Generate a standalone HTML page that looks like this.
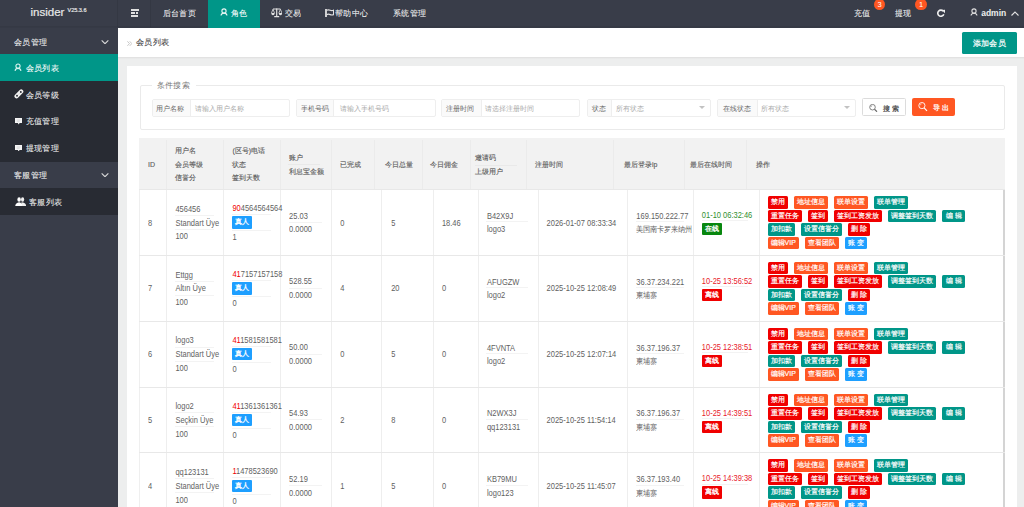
<!DOCTYPE html><html><head><meta charset="utf-8"><style>
*{margin:0;padding:0;box-sizing:border-box}
html,body{width:1024px;height:507px;overflow:hidden;background:#EDEEEE;font-family:"Liberation Sans",sans-serif;color:#666}
.a{position:absolute}
.t{position:absolute;white-space:nowrap}
.hd{position:absolute;left:0;top:0;width:1024px;height:28px;background:#393D49}
.sd{position:absolute;left:0;top:27px;width:118px;height:480px;background:#393D49}
.nv{position:absolute;white-space:nowrap;color:rgba(255,255,255,.9);font-size:8px;line-height:10px;letter-spacing:.4px;-webkit-text-stroke:.15px rgba(255,255,255,.6)}
.sub{position:absolute;left:0;width:118px;background:#282B33}
.strip{position:absolute;left:118px;top:28px;width:906px;height:29px;background:#fff}
.card{position:absolute;left:126.5px;top:66px;width:890.5px;height:460px;background:#fff}
.grp{position:absolute;top:98.5px;height:18px;border:1px solid #eee;border-radius:2px;background:#fff}
.lb{position:absolute;left:0;top:0;height:16px;background:#FAFAFA;border-right:1px solid #eee;color:#555;font-size:7px;line-height:16px;text-align:center;white-space:nowrap}
.ph{position:absolute;top:0;height:16px;color:#b0b0b0;font-size:6.5px;line-height:16px;white-space:nowrap}
.arr{position:absolute;top:6.5px;width:0;height:0;border-left:3px solid transparent;border-right:3px solid transparent;border-top:3.5px solid #c2c2c2}
.tt{position:absolute;white-space:nowrap;font-size:7px;color:#5a5a5a;line-height:10px;-webkit-text-stroke:.12px #5a5a5a}
.td{position:absolute;white-space:nowrap;font-size:7.5px;color:#5f5f5f;line-height:10px;transform:scaleY(1.12);transform-origin:0 60%}
.vl{position:absolute;width:1px;background:#eeeeee}
.hl{position:absolute;height:1px;background:#e8e8e8}
.b{position:absolute;height:12.5px;color:#fff;font-size:7px;line-height:12.5px;text-align:center;border-radius:1.5px;white-space:nowrap;-webkit-text-stroke:.18px #fff}
.r{background:#F00000}.o{background:#FF5722}.g{background:#009688}.bl{background:#1E9FFF}
.ul{position:absolute;height:1px;background:#f3f3f3}
</style></head><body>
<div class="hd"></div>
<div class="sd"></div>
<div class="t" style="left:30.5px;top:5px;font-size:11.5px;line-height:14px;color:#e8e8e8;-webkit-text-stroke:.2px #e8e8e8">insider</div>
<div class="t" style="left:67.5px;top:7px;font-size:5.5px;line-height:6px;color:#e8e8e8;-webkit-text-stroke:.2px #e8e8e8">V25.3.6</div>
<div class="a" style="left:117px;top:0;width:1px;height:27px;background:rgba(0,0,0,.08)"></div>
<div class="a" style="left:150px;top:0;width:1px;height:27px;background:rgba(0,0,0,.08)"></div>
<div class="a" style="left:0;top:26px;width:1024px;height:1px;background:rgba(0,0,0,.06)"></div><div class="a" style="left:0;top:27px;width:1024px;height:1px;background:rgba(0,0,0,.04)"></div>
<div class="a" style="left:130.8px;top:9.1px;width:7.9px;height:1.7px;background:#e0e0e0"></div>
<div class="a" style="left:130.8px;top:12.2px;width:4.3px;height:1.7px;background:#e0e0e0"></div>
<div class="a" style="left:135.9px;top:12.2px;width:2.1px;height:1.7px;background:#e0e0e0"></div>
<div class="a" style="left:130.8px;top:15px;width:7.5px;height:1.5px;background:#e0e0e0"></div>
<div class="nv" style="left:162.5px;top:8.5px">后台首页</div>
<div class="a" style="left:208px;top:0;width:51.5px;height:27.5px;background:#009688"></div>
<svg class="a" style="left:220.2px;top:8.4px" width="8" height="8.5" viewBox="-0.5 -0.5 8 8.5"><circle cx="3.5" cy="2.475" r="2.1" fill="none" stroke="#e6f5f3" stroke-width="1.1"/><path d="M0.55 6.95 C0.84 4.65 2.1 4.65 3.5 4.65 C4.8999999999999995 4.65 6.16 4.65 6.45 6.95" fill="none" stroke="#e6f5f3" stroke-width="1.1"/></svg>
<div class="nv" style="left:230.5px;top:8.5px;color:#fff">角色</div>
<svg class="a" style="left:270.6px;top:8.4px" width="11.4" height="9.4" viewBox="0 0 11.4 9.4"><path d="M2 1 H9.4 M5.7 0.3 V8.4 M3.2 8.7 H8.2" stroke="#e2e2e2" stroke-width="1.2" fill="none"/><path d="M2 1.2 L0.5 5 M2 1.2 L3.5 5 M9.4 1.2 L7.9 5 M9.4 1.2 L10.9 5" stroke="#e2e2e2" stroke-width="0.8" fill="none"/><path d="M0.2 5 H3.8 Q3.6 7.2 2 7.2 Q0.4 7.2 0.2 5 Z M7.6 5 H11.2 Q11 7.2 9.4 7.2 Q7.8 7.2 7.6 5 Z" fill="#e2e2e2"/></svg>
<div class="nv" style="left:284.5px;top:8.5px">交易</div>
<svg class="a" style="left:324.8px;top:8.8px" width="9.4" height="8" viewBox="0 0 9.4 8"><path d="M1 0 V8" stroke="#e2e2e2" stroke-width="1.8"/><path d="M1.6 1.2 Q3.5 0.4 5.2 1.2 Q7 2 8.6 1.2 V5.6 Q7 6.4 5.2 5.6 Q3.5 4.8 1.6 5.6" stroke="#e2e2e2" stroke-width="1.2" fill="none"/></svg>
<div class="nv" style="left:335px;top:8.5px">帮助中心</div>
<div class="nv" style="left:393px;top:8.5px">系统管理</div>
<div class="nv" style="left:853.5px;top:8.5px">充值</div>
<div class="a" style="left:873.9px;top:-1.4px;width:11.6px;height:11.2px;border-radius:6px;background:#FF5722"></div>
<div class="t" style="left:873.9px;top:-0.5px;width:11.6px;text-align:center;font-size:7.5px;line-height:10px;color:#fff">3</div>
<div class="nv" style="left:895px;top:8.5px">提现</div>
<div class="a" style="left:915.4px;top:-1.4px;width:11.6px;height:11.2px;border-radius:6px;background:#FF5722"></div>
<div class="t" style="left:915.4px;top:-0.5px;width:11.6px;text-align:center;font-size:7.5px;line-height:10px;color:#fff">1</div>
<svg class="a" style="left:936.5px;top:8.8px" width="8.6" height="8.4" viewBox="0 0 8.6 8.4"><path d="M6.27 2.21 A3.1 3.1 0 1 0 6.81 5.26" stroke="#eee" stroke-width="1.6" fill="none"/><path d="M5 1 L8.4 0.6 L7.8 4.2 Z" fill="#eee"/></svg>
<svg class="a" style="left:970.4px;top:8.2px" width="8" height="8.6" viewBox="-0.5 -0.5 8 8.6"><circle cx="3.5" cy="2.508" r="2.1" fill="none" stroke="#ddd" stroke-width="1.1"/><path d="M0.55 7.05 C0.84 4.712 2.1 4.712 3.5 4.712 C4.8999999999999995 4.712 6.16 4.712 6.45 7.05" fill="none" stroke="#ddd" stroke-width="1.1"/></svg>
<div class="t" style="left:981.2px;top:7px;font-size:8.5px;font-weight:bold;line-height:12px;color:#eee">admin</div>
<svg class="a" style="left:1010.5px;top:10.5px" width="8" height="5" viewBox="0 0 16 10"><path d="M1 9 L8 2 L15 9" stroke="#e2e2e2" stroke-width="2.2" fill="none"/></svg>
<div class="nv" style="left:14px;top:37.5px">会员管理</div>
<svg class="a" style="left:101px;top:39.5px" width="8" height="4.6" viewBox="0 0 18 11"><path d="M1 1 L9 9 L17 1" stroke="#d8d8d8" stroke-width="2.6" fill="none"/></svg>
<div class="sub" style="top:54px;height:107.5px"></div>
<div class="a" style="left:0;top:54px;width:118px;height:27px;background:#009688"></div>
<svg class="a" style="left:14.4px;top:63.4px" width="8" height="8.9" viewBox="-0.5 -0.5 8 8.9"><circle cx="3.5" cy="2.607" r="2.1" fill="none" stroke="#d8f3ee" stroke-width="1.1"/><path d="M0.55 7.3500000000000005 C0.84 4.898000000000001 2.1 4.898000000000001 3.5 4.898000000000001 C4.8999999999999995 4.898000000000001 6.16 4.898000000000001 6.45 7.3500000000000005" fill="none" stroke="#d8f3ee" stroke-width="1.1"/></svg>
<div class="nv" style="left:25.5px;top:64px;color:#fff">会员列表</div>
<svg class="a" style="left:13.8px;top:89.3px" width="9.8" height="9.8" viewBox="0 0 9.8 9.8"><rect x="-0.5" y="2.8" width="10.8" height="4.2" rx="2.1" transform="rotate(-45 4.9 4.9)" fill="#f2f2f2"/><circle cx="3" cy="6.8" r="0.95" fill="#282B33"/><circle cx="6.8" cy="3" r="0.95" fill="#282B33"/><path d="M3.9 5.9 L5.9 3.9" stroke="#c8c8cc" stroke-width="0.7"/></svg>
<div class="nv" style="left:25.5px;top:90.5px">会员等级</div>
<svg class="a" style="left:14.7px;top:118.2px" width="7.4" height="6.4" viewBox="0 0 7.4 6.4"><path d="M0 0 H7.4 V5 H4.6 L3.7 6.4 L2.8 5 H0 Z" fill="#f4f4f4"/><path d="M1.8 2 H5.6 M1.8 3.3 H4.6" stroke="#c8c9cc" stroke-width="0.6"/></svg>
<div class="nv" style="left:25.5px;top:117.2px">充值管理</div>
<svg class="a" style="left:14.7px;top:145px" width="7.4" height="6.4" viewBox="0 0 7.4 6.4"><path d="M0 0 H7.4 V5 H4.6 L3.7 6.4 L2.8 5 H0 Z" fill="#f4f4f4"/><path d="M1.8 2 H5.6 M1.8 3.3 H4.6" stroke="#c8c9cc" stroke-width="0.6"/></svg>
<div class="nv" style="left:25.5px;top:144.2px">提现管理</div>
<div class="a" style="left:0;top:161.5px;width:118px;height:26.5px;background:#393D49"></div>
<div class="nv" style="left:14px;top:170.8px">客服管理</div>
<svg class="a" style="left:101px;top:172.7px" width="8" height="4.6" viewBox="0 0 18 11"><path d="M1 1 L9 9 L17 1" stroke="#d8d8d8" stroke-width="2.6" fill="none"/></svg>
<div class="sub" style="top:188px;height:26.5px"></div>
<svg class="a" style="left:14.6px;top:196.6px" width="11.4" height="9.6" viewBox="0 0 11.4 9.6"><ellipse cx="4.1" cy="2.5" rx="1.75" ry="2.3" fill="#fff"/><ellipse cx="7.6" cy="2.5" rx="1.6" ry="2.2" fill="#f0f0f0"/><path d="M6.3 5.3 Q10.8 5.3 11.3 9.2 H7.6 Z" fill="#f0f0f0"/><path d="M0.2 9.2 Q0.5 5.6 4.1 5.2 Q7.7 5.6 8 9.2 Z" fill="#fff"/></svg>
<div class="nv" style="left:29px;top:197.6px">客服列表</div>
<div class="strip"></div>
<div class="a" style="left:118px;top:57px;width:906px;height:2px;background:linear-gradient(#dedede,#EDEEEE)"></div>
<svg class="a" style="left:127px;top:40.8px" width="5.4" height="5.2" viewBox="0 0 11 10.4"><path d="M0.8 0.6 L5 5.2 L0.8 9.8 M5.6 0.6 L9.8 5.2 L5.6 9.8" stroke="#a8a8a8" stroke-width="1.3" fill="none"/></svg>
<div class="t" style="left:136.2px;top:38px;font-size:8px;line-height:10px;color:#444;letter-spacing:.25px;-webkit-text-stroke:.1px #444">会员列表</div>
<div class="a" style="left:962.2px;top:32px;width:54.8px;height:22.4px;background:#009688;border-radius:1.5px"></div>
<div class="t" style="left:972.5px;top:39px;font-size:8px;line-height:10px;color:#fff;letter-spacing:.45px;-webkit-text-stroke:.2px #fff">添加会员</div>
<div class="card"></div>
<div class="a" style="left:139.5px;top:85px;width:865.5px;height:44.5px;border:1px solid #eaeaea;border-radius:2px"></div>
<div class="a" style="left:152px;top:82px;width:43.5px;height:6px;background:#fff"></div>
<div class="t" style="left:156.6px;top:81px;font-size:8px;line-height:10px;color:#777;letter-spacing:.4px">条件搜索</div>
<div class="grp" style="left:151.6px;width:138px"><div class="lb" style="width:38px"></div><div class="t" style="left:3.700000000000017px;top:4.4px;font-size:7px;line-height:10px;color:#666">用户名称</div><div class="t" style="left:42.599999999999994px;top:4.4px;font-size:7px;line-height:10px;color:#aaa">请输入用户名称</div></div>
<div class="grp" style="left:296.3px;width:139.4px"><div class="lb" style="width:37.2px"></div><div class="t" style="left:4.0px;top:4.4px;font-size:7px;line-height:10px;color:#666">手机号码</div><div class="t" style="left:42.69999999999999px;top:4.4px;font-size:7px;line-height:10px;color:#aaa">请输入手机号码</div></div>
<div class="grp" style="left:441.4px;width:139.1px"><div class="lb" style="width:40px"></div><div class="t" style="left:4.100000000000023px;top:4.4px;font-size:7px;line-height:10px;color:#666">注册时间</div><div class="t" style="left:42.80000000000001px;top:4.4px;font-size:7px;line-height:10px;color:#aaa">请选择注册时间</div></div>
<div class="grp" style="left:586.6px;width:124.4px"><div class="lb" style="width:24px"></div><div class="t" style="left:4.100000000000023px;top:4.4px;font-size:7px;line-height:10px;color:#666">状态</div><div class="t" style="left:28.399999999999977px;top:4.4px;font-size:7px;line-height:10px;color:#aaa">所有状态</div><div class="arr" style="left:111.19999999999993px"></div></div>
<div class="grp" style="left:717.4px;width:138.7px"><div class="lb" style="width:39.8px"></div><div class="t" style="left:4.2000000000000455px;top:4.4px;font-size:7px;line-height:10px;color:#666">在线状态</div><div class="t" style="left:43.10000000000002px;top:4.4px;font-size:7px;line-height:10px;color:#aaa">所有状态</div><div class="arr" style="left:125.39999999999998px"></div></div>
<div class="a" style="left:862.3px;top:98.2px;width:43.5px;height:18.3px;border:1px solid #dcdcdc;border-radius:1.5px;background:#fff"></div>
<svg class="a" style="left:869px;top:104px" width="9.8" height="8.4" viewBox="0 0 19.6 16.8"><circle cx="7" cy="6.4" r="5.6" stroke="#666" stroke-width="1.6" fill="none"/><path d="M3.8 6 A3.2 3.2 0 0 1 6.5 3.3" stroke="#666" stroke-width="1" fill="none"/><path d="M11 10.5 L16 15.5" stroke="#666" stroke-width="2.2"/></svg>
<div class="t" style="left:882.9px;top:103.5px;font-size:7px;line-height:10px;color:#444;letter-spacing:2.6px;-webkit-text-stroke:.2px #444">搜索</div>
<div class="a" style="left:912.2px;top:98.2px;width:42.5px;height:18.3px;border-radius:2px;background:#FF5722"></div>
<svg class="a" style="left:918.4px;top:102.2px" width="9.8" height="9.6" viewBox="0 0 19.6 19.2"><circle cx="7.8" cy="7.2" r="6.2" stroke="#fff" stroke-width="1.8" fill="none"/><path d="M4.3 6.8 A3.5 3.5 0 0 1 7.3 3.7" stroke="#fff" stroke-width="1.1" fill="none"/><path d="M12.3 11.8 L18 17.8" stroke="#fff" stroke-width="2.4"/></svg>
<div class="t" style="left:932.7px;top:103px;font-size:7px;line-height:10px;color:#fff;letter-spacing:2.2px;-webkit-text-stroke:.25px #fff">导出</div>
<div class="a" style="left:138.5px;top:138px;width:866.5px;height:51px;background:#F2F2F2"></div>
<div class="vl" style="left:166px;top:140px;height:49px;background:#ebebeb"></div>
<div class="vl" style="left:223px;top:140px;height:49px;background:#ebebeb"></div>
<div class="vl" style="left:279.6px;top:140px;height:49px;background:#ebebeb"></div>
<div class="vl" style="left:330.5px;top:140px;height:49px;background:#ebebeb"></div>
<div class="vl" style="left:374.4px;top:140px;height:49px;background:#ebebeb"></div>
<div class="vl" style="left:422px;top:140px;height:49px;background:#ebebeb"></div>
<div class="vl" style="left:470px;top:140px;height:49px;background:#ebebeb"></div>
<div class="vl" style="left:525.5px;top:140px;height:49px;background:#ebebeb"></div>
<div class="vl" style="left:613px;top:140px;height:49px;background:#ebebeb"></div>
<div class="vl" style="left:683.5px;top:140px;height:49px;background:#ebebeb"></div>
<div class="vl" style="left:746.4px;top:140px;height:49px;background:#ebebeb"></div>
<div class="tt" style="left:148px;top:159.5px;">ID</div>
<div class="tt" style="left:175.4px;top:146.0px;">用户名</div>
<div class="tt" style="left:175.4px;top:159.5px;">会员等级</div>
<div class="tt" style="left:175.4px;top:173.0px;">信誉分</div>
<div class="tt" style="left:232.4px;top:146.0px;">(区号)电话</div>
<div class="tt" style="left:232.4px;top:159.5px;">状态</div>
<div class="tt" style="left:232.4px;top:173.0px;">签到天数</div>
<div class="tt" style="left:289.1px;top:152.5px;">账户</div>
<div class="tt" style="left:289.1px;top:166.5px;">利息宝金额</div>
<div class="a" style="left:288px;top:163.8px;width:32px;height:1px;background:#e9e9e9"></div>
<div class="a" style="left:475px;top:164.5px;width:42px;height:1px;background:#e9e9e9"></div>
<div class="tt" style="left:340px;top:159.5px;">已完成</div>
<div class="tt" style="left:385.2px;top:159.5px;">今日总量</div>
<div class="tt" style="left:430.1px;top:159.5px;">今日佣金</div>
<div class="tt" style="left:475.1px;top:152.5px;">邀请码</div>
<div class="tt" style="left:475.1px;top:166.5px;">上级用户</div>
<div class="tt" style="left:535px;top:159.5px;">注册时间</div>
<div class="tt" style="left:623.9px;top:159.5px;">最后登录ip</div>
<div class="tt" style="left:689.5px;top:159.5px;">最后在线时间</div>
<div class="tt" style="left:755.7px;top:159.5px;">操作</div>
<div class="a" style="left:138.5px;top:189px;width:867.0px;height:330px;background:#fff"></div>
<div class="vl" style="left:138.5px;top:189px;height:400px;background:#efefef"></div>
<div class="a" style="left:1003px;top:189px;width:2px;height:330px;background:#d4d4d4"></div>
<div class="vl" style="left:166.4px;top:189px;height:330px"></div>
<div class="vl" style="left:222.9px;top:189px;height:330px"></div>
<div class="vl" style="left:279.6px;top:189px;height:330px"></div>
<div class="vl" style="left:330.5px;top:189px;height:330px"></div>
<div class="vl" style="left:381.4px;top:189px;height:330px"></div>
<div class="vl" style="left:432.5px;top:189px;height:330px"></div>
<div class="vl" style="left:477.5px;top:189px;height:330px"></div>
<div class="vl" style="left:537.8px;top:189px;height:330px"></div>
<div class="vl" style="left:626.9px;top:189px;height:330px"></div>
<div class="vl" style="left:692.8px;top:189px;height:330px"></div>
<div class="vl" style="left:759px;top:189px;height:330px"></div>
<div class="hl" style="left:138.5px;top:189px;width:866.0px"></div>
<div class="hl" style="left:138.5px;top:254.85px;width:866.0px"></div>
<div class="td" style="left:148px;top:218.5px;">8</div>
<div class="td" style="left:175.4px;top:204.7px;">456456</div>
<div class="td" style="left:175.4px;top:218.5px;">Standart Üye</div>
<div class="td" style="left:175.4px;top:232.3px;">100</div>
<div class="ul" style="left:175px;top:214.8px;width:38.5px"></div>
<div class="ul" style="left:175px;top:228.9px;width:38.5px"></div>
<div class="td" style="left:232.4px;top:204.0px;"><span style="color:#F00000">90</span>4564564564</div>
<div class="a" style="left:232.2px;top:216.1px;width:19.8px;height:12.6px;background:#1E9FFF;border-radius:1px"></div>
<div class="t" style="left:232.2px;top:216.1px;width:19.8px;text-align:center;font-size:7px;line-height:12.6px;color:#fff;-webkit-text-stroke:.3px #fff">真人</div>
<div class="td" style="left:232.4px;top:233.3px;">1</div>
<div class="ul" style="left:232px;top:214.0px;width:39px"></div>
<div class="ul" style="left:232px;top:230.1px;width:39px"></div>
<div class="td" style="left:289.1px;top:211.5px;">25.03</div>
<div class="td" style="left:289.1px;top:225.1px;">0.0000</div>
<div class="ul" style="left:289px;top:221.8px;width:32.5px"></div>
<div class="td" style="left:340.3px;top:218.5px;">0</div>
<div class="td" style="left:391.2px;top:218.5px;">5</div>
<div class="td" style="left:441.9px;top:218.5px;">18.46</div>
<div class="td" style="left:486.9px;top:211.8px;">B42X9J</div>
<div class="td" style="left:486.9px;top:225.2px;">logo3</div>
<div class="ul" style="left:486px;top:221.4px;width:41.5px"></div>
<div class="td" style="left:546.6px;top:218.5px;">2026-01-07 08:33:34</div>
<div class="td" style="left:636.3px;top:211.8px;">169.150.222.77</div>
<div class="td" style="left:636.3px;top:225.2px;width:56px;overflow:hidden;font-size:7px">美国南卡罗来纳州</div>
<div class="ul" style="left:636px;top:221.4px;width:48px"></div>
<div class="ul" style="left:702px;top:220.4px;width:46px"></div>
<div class="td" style="left:701.8px;top:211.0px;color:#2f8f2f">01-10 06:32:46</div>
<div class="a" style="left:701.8px;top:223.0px;width:20px;height:12.4px;background:#08870f;border-radius:1px"></div>
<div class="t" style="left:701.8px;top:223.0px;width:20px;text-align:center;font-size:7px;line-height:12.4px;color:#fff;-webkit-text-stroke:.3px #fff">在线</div>
<div class="b r" style="left:767.5px;top:196.0px;width:20px">禁用</div>
<div class="b o" style="left:793.5px;top:196.0px;width:34px">地址信息</div>
<div class="b o" style="left:833.5px;top:196.0px;width:34px">联单设置</div>
<div class="b g" style="left:873.7px;top:196.0px;width:34.5px">联单管理</div>
<div class="b r" style="left:767.5px;top:209.5px;width:34px">重置任务</div>
<div class="b r" style="left:807.5px;top:209.5px;width:20px">签到</div>
<div class="b r" style="left:833.7px;top:209.5px;width:48.5px">签到工资发放</div>
<div class="b g" style="left:887.8px;top:209.5px;width:48.7px">调整签到天数</div>
<div class="b g" style="left:942.2px;top:209.5px;width:23px">编 辑</div>
<div class="b g" style="left:767.5px;top:223.0px;width:27px">加扣款</div>
<div class="b g" style="left:800.5px;top:223.0px;width:41px">设置信誉分</div>
<div class="b r" style="left:847.7px;top:223.0px;width:22.5px">删 除</div>
<div class="b o" style="left:767.5px;top:236.5px;width:31.5px">编辑VIP</div>
<div class="b o" style="left:804.5px;top:236.5px;width:34px">查看团队</div>
<div class="b bl" style="left:844.8px;top:236.5px;width:22px">账 变</div>
<div class="hl" style="left:138.5px;top:320.7px;width:866.0px"></div>
<div class="td" style="left:148px;top:284.35px;">7</div>
<div class="td" style="left:175.4px;top:270.55px;">Ettgg</div>
<div class="td" style="left:175.4px;top:284.35px;">Altın Üye</div>
<div class="td" style="left:175.4px;top:298.15000000000003px;">100</div>
<div class="ul" style="left:175px;top:280.65000000000003px;width:38.5px"></div>
<div class="ul" style="left:175px;top:294.75px;width:38.5px"></div>
<div class="td" style="left:232.4px;top:269.85px;"><span style="color:#F00000">41</span>7157157158</div>
<div class="a" style="left:232.2px;top:281.95000000000005px;width:19.8px;height:12.6px;background:#1E9FFF;border-radius:1px"></div>
<div class="t" style="left:232.2px;top:281.95000000000005px;width:19.8px;text-align:center;font-size:7px;line-height:12.6px;color:#fff;-webkit-text-stroke:.3px #fff">真人</div>
<div class="td" style="left:232.4px;top:299.15000000000003px;">0</div>
<div class="ul" style="left:232px;top:279.85px;width:39px"></div>
<div class="ul" style="left:232px;top:295.95000000000005px;width:39px"></div>
<div class="td" style="left:289.1px;top:277.35px;">528.55</div>
<div class="td" style="left:289.1px;top:290.95000000000005px;">0.0000</div>
<div class="ul" style="left:289px;top:287.65000000000003px;width:32.5px"></div>
<div class="td" style="left:340.3px;top:284.35px;">4</div>
<div class="td" style="left:391.2px;top:284.35px;">20</div>
<div class="td" style="left:441.9px;top:284.35px;">0</div>
<div class="td" style="left:486.9px;top:277.65000000000003px;">AFUGZW</div>
<div class="td" style="left:486.9px;top:291.05px;">logo2</div>
<div class="ul" style="left:486px;top:287.25px;width:41.5px"></div>
<div class="td" style="left:546.6px;top:284.35px;">2025-10-25 12:08:49</div>
<div class="td" style="left:636.3px;top:277.65000000000003px;">36.37.234.221</div>
<div class="td" style="left:636.3px;top:291.05px;width:56px;overflow:hidden;font-size:7px">柬埔寨</div>
<div class="ul" style="left:636px;top:287.25px;width:48px"></div>
<div class="ul" style="left:702px;top:286.25px;width:46px"></div>
<div class="td" style="left:701.8px;top:276.85px;color:#E8202A">10-25 13:56:52</div>
<div class="a" style="left:701.8px;top:288.85px;width:20px;height:12.4px;background:#F00000;border-radius:1px"></div>
<div class="t" style="left:701.8px;top:288.85px;width:20px;text-align:center;font-size:7px;line-height:12.4px;color:#fff;-webkit-text-stroke:.3px #fff">离线</div>
<div class="b r" style="left:767.5px;top:261.85px;width:20px">禁用</div>
<div class="b o" style="left:793.5px;top:261.85px;width:34px">地址信息</div>
<div class="b o" style="left:833.5px;top:261.85px;width:34px">联单设置</div>
<div class="b g" style="left:873.7px;top:261.85px;width:34.5px">联单管理</div>
<div class="b r" style="left:767.5px;top:275.35px;width:34px">重置任务</div>
<div class="b r" style="left:807.5px;top:275.35px;width:20px">签到</div>
<div class="b r" style="left:833.7px;top:275.35px;width:48.5px">签到工资发放</div>
<div class="b g" style="left:887.8px;top:275.35px;width:48.7px">调整签到天数</div>
<div class="b g" style="left:942.2px;top:275.35px;width:23px">编 辑</div>
<div class="b g" style="left:767.5px;top:288.85px;width:27px">加扣款</div>
<div class="b g" style="left:800.5px;top:288.85px;width:41px">设置信誉分</div>
<div class="b r" style="left:847.7px;top:288.85px;width:22.5px">删 除</div>
<div class="b o" style="left:767.5px;top:302.35px;width:31.5px">编辑VIP</div>
<div class="b o" style="left:804.5px;top:302.35px;width:34px">查看团队</div>
<div class="b bl" style="left:844.8px;top:302.35px;width:22px">账 变</div>
<div class="hl" style="left:138.5px;top:386.54999999999995px;width:866.0px"></div>
<div class="td" style="left:148px;top:350.2px;">6</div>
<div class="td" style="left:175.4px;top:336.4px;">logo3</div>
<div class="td" style="left:175.4px;top:350.2px;">Standart Üye</div>
<div class="td" style="left:175.4px;top:364.0px;">100</div>
<div class="ul" style="left:175px;top:346.5px;width:38.5px"></div>
<div class="ul" style="left:175px;top:360.59999999999997px;width:38.5px"></div>
<div class="td" style="left:232.4px;top:335.7px;"><span style="color:#F00000">41</span>1581581581</div>
<div class="a" style="left:232.2px;top:347.8px;width:19.8px;height:12.6px;background:#1E9FFF;border-radius:1px"></div>
<div class="t" style="left:232.2px;top:347.8px;width:19.8px;text-align:center;font-size:7px;line-height:12.6px;color:#fff;-webkit-text-stroke:.3px #fff">真人</div>
<div class="td" style="left:232.4px;top:365.0px;">0</div>
<div class="ul" style="left:232px;top:345.7px;width:39px"></div>
<div class="ul" style="left:232px;top:361.8px;width:39px"></div>
<div class="td" style="left:289.1px;top:343.2px;">50.00</div>
<div class="td" style="left:289.1px;top:356.8px;">0.0000</div>
<div class="ul" style="left:289px;top:353.5px;width:32.5px"></div>
<div class="td" style="left:340.3px;top:350.2px;">0</div>
<div class="td" style="left:391.2px;top:350.2px;">5</div>
<div class="td" style="left:441.9px;top:350.2px;">0</div>
<div class="td" style="left:486.9px;top:343.5px;">4FVNTA</div>
<div class="td" style="left:486.9px;top:356.9px;">logo2</div>
<div class="ul" style="left:486px;top:353.09999999999997px;width:41.5px"></div>
<div class="td" style="left:546.6px;top:350.2px;">2025-10-25 12:07:14</div>
<div class="td" style="left:636.3px;top:343.5px;">36.37.196.37</div>
<div class="td" style="left:636.3px;top:356.9px;width:56px;overflow:hidden;font-size:7px">柬埔寨</div>
<div class="ul" style="left:636px;top:353.09999999999997px;width:48px"></div>
<div class="ul" style="left:702px;top:352.09999999999997px;width:46px"></div>
<div class="td" style="left:701.8px;top:342.7px;color:#E8202A">10-25 12:38:51</div>
<div class="a" style="left:701.8px;top:354.7px;width:20px;height:12.4px;background:#F00000;border-radius:1px"></div>
<div class="t" style="left:701.8px;top:354.7px;width:20px;text-align:center;font-size:7px;line-height:12.4px;color:#fff;-webkit-text-stroke:.3px #fff">离线</div>
<div class="b r" style="left:767.5px;top:327.7px;width:20px">禁用</div>
<div class="b o" style="left:793.5px;top:327.7px;width:34px">地址信息</div>
<div class="b o" style="left:833.5px;top:327.7px;width:34px">联单设置</div>
<div class="b g" style="left:873.7px;top:327.7px;width:34.5px">联单管理</div>
<div class="b r" style="left:767.5px;top:341.2px;width:34px">重置任务</div>
<div class="b r" style="left:807.5px;top:341.2px;width:20px">签到</div>
<div class="b r" style="left:833.7px;top:341.2px;width:48.5px">签到工资发放</div>
<div class="b g" style="left:887.8px;top:341.2px;width:48.7px">调整签到天数</div>
<div class="b g" style="left:942.2px;top:341.2px;width:23px">编 辑</div>
<div class="b g" style="left:767.5px;top:354.7px;width:27px">加扣款</div>
<div class="b g" style="left:800.5px;top:354.7px;width:41px">设置信誉分</div>
<div class="b r" style="left:847.7px;top:354.7px;width:22.5px">删 除</div>
<div class="b o" style="left:767.5px;top:368.2px;width:31.5px">编辑VIP</div>
<div class="b o" style="left:804.5px;top:368.2px;width:34px">查看团队</div>
<div class="b bl" style="left:844.8px;top:368.2px;width:22px">账 变</div>
<div class="hl" style="left:138.5px;top:452.4px;width:866.0px"></div>
<div class="td" style="left:148px;top:416.04999999999995px;">5</div>
<div class="td" style="left:175.4px;top:402.24999999999994px;">logo2</div>
<div class="td" style="left:175.4px;top:416.04999999999995px;">Seçkin Üye</div>
<div class="td" style="left:175.4px;top:429.84999999999997px;">100</div>
<div class="ul" style="left:175px;top:412.34999999999997px;width:38.5px"></div>
<div class="ul" style="left:175px;top:426.44999999999993px;width:38.5px"></div>
<div class="td" style="left:232.4px;top:401.54999999999995px;"><span style="color:#F00000">41</span>1361361361</div>
<div class="a" style="left:232.2px;top:413.65px;width:19.8px;height:12.6px;background:#1E9FFF;border-radius:1px"></div>
<div class="t" style="left:232.2px;top:413.65px;width:19.8px;text-align:center;font-size:7px;line-height:12.6px;color:#fff;-webkit-text-stroke:.3px #fff">真人</div>
<div class="td" style="left:232.4px;top:430.84999999999997px;">0</div>
<div class="ul" style="left:232px;top:411.54999999999995px;width:39px"></div>
<div class="ul" style="left:232px;top:427.65px;width:39px"></div>
<div class="td" style="left:289.1px;top:409.04999999999995px;">54.93</div>
<div class="td" style="left:289.1px;top:422.65px;">0.0000</div>
<div class="ul" style="left:289px;top:419.34999999999997px;width:32.5px"></div>
<div class="td" style="left:340.3px;top:416.04999999999995px;">2</div>
<div class="td" style="left:391.2px;top:416.04999999999995px;">8</div>
<div class="td" style="left:441.9px;top:416.04999999999995px;">0</div>
<div class="td" style="left:486.9px;top:409.34999999999997px;">N2WX3J</div>
<div class="td" style="left:486.9px;top:422.74999999999994px;">qq123131</div>
<div class="ul" style="left:486px;top:418.94999999999993px;width:41.5px"></div>
<div class="td" style="left:546.6px;top:416.04999999999995px;">2025-10-25 11:54:14</div>
<div class="td" style="left:636.3px;top:409.34999999999997px;">36.37.196.37</div>
<div class="td" style="left:636.3px;top:422.74999999999994px;width:56px;overflow:hidden;font-size:7px">柬埔寨</div>
<div class="ul" style="left:636px;top:418.94999999999993px;width:48px"></div>
<div class="ul" style="left:702px;top:417.94999999999993px;width:46px"></div>
<div class="td" style="left:701.8px;top:408.54999999999995px;color:#E8202A">10-25 14:39:51</div>
<div class="a" style="left:701.8px;top:420.54999999999995px;width:20px;height:12.4px;background:#F00000;border-radius:1px"></div>
<div class="t" style="left:701.8px;top:420.54999999999995px;width:20px;text-align:center;font-size:7px;line-height:12.4px;color:#fff;-webkit-text-stroke:.3px #fff">离线</div>
<div class="b r" style="left:767.5px;top:393.54999999999995px;width:20px">禁用</div>
<div class="b o" style="left:793.5px;top:393.54999999999995px;width:34px">地址信息</div>
<div class="b o" style="left:833.5px;top:393.54999999999995px;width:34px">联单设置</div>
<div class="b g" style="left:873.7px;top:393.54999999999995px;width:34.5px">联单管理</div>
<div class="b r" style="left:767.5px;top:407.04999999999995px;width:34px">重置任务</div>
<div class="b r" style="left:807.5px;top:407.04999999999995px;width:20px">签到</div>
<div class="b r" style="left:833.7px;top:407.04999999999995px;width:48.5px">签到工资发放</div>
<div class="b g" style="left:887.8px;top:407.04999999999995px;width:48.7px">调整签到天数</div>
<div class="b g" style="left:942.2px;top:407.04999999999995px;width:23px">编 辑</div>
<div class="b g" style="left:767.5px;top:420.54999999999995px;width:27px">加扣款</div>
<div class="b g" style="left:800.5px;top:420.54999999999995px;width:41px">设置信誉分</div>
<div class="b r" style="left:847.7px;top:420.54999999999995px;width:22.5px">删 除</div>
<div class="b o" style="left:767.5px;top:434.04999999999995px;width:31.5px">编辑VIP</div>
<div class="b o" style="left:804.5px;top:434.04999999999995px;width:34px">查看团队</div>
<div class="b bl" style="left:844.8px;top:434.04999999999995px;width:22px">账 变</div>
<div class="hl" style="left:138.5px;top:518.25px;width:866.0px"></div>
<div class="td" style="left:148px;top:481.9px;">4</div>
<div class="td" style="left:175.4px;top:468.09999999999997px;">qq123131</div>
<div class="td" style="left:175.4px;top:481.9px;">Standart Üye</div>
<div class="td" style="left:175.4px;top:495.7px;">100</div>
<div class="ul" style="left:175px;top:478.2px;width:38.5px"></div>
<div class="ul" style="left:175px;top:492.29999999999995px;width:38.5px"></div>
<div class="td" style="left:232.4px;top:467.4px;"><span style="color:#F00000">1</span>1478523690</div>
<div class="a" style="left:232.2px;top:479.5px;width:19.8px;height:12.6px;background:#1E9FFF;border-radius:1px"></div>
<div class="t" style="left:232.2px;top:479.5px;width:19.8px;text-align:center;font-size:7px;line-height:12.6px;color:#fff;-webkit-text-stroke:.3px #fff">真人</div>
<div class="td" style="left:232.4px;top:496.7px;">0</div>
<div class="ul" style="left:232px;top:477.4px;width:39px"></div>
<div class="ul" style="left:232px;top:493.5px;width:39px"></div>
<div class="td" style="left:289.1px;top:474.9px;">52.19</div>
<div class="td" style="left:289.1px;top:488.5px;">0.0000</div>
<div class="ul" style="left:289px;top:485.2px;width:32.5px"></div>
<div class="td" style="left:340.3px;top:481.9px;">1</div>
<div class="td" style="left:391.2px;top:481.9px;">5</div>
<div class="td" style="left:441.9px;top:481.9px;">0</div>
<div class="td" style="left:486.9px;top:475.2px;">KB79MU</div>
<div class="td" style="left:486.9px;top:488.59999999999997px;">logo123</div>
<div class="ul" style="left:486px;top:484.79999999999995px;width:41.5px"></div>
<div class="td" style="left:546.6px;top:481.9px;">2025-10-25 11:45:07</div>
<div class="td" style="left:636.3px;top:475.2px;">36.37.193.40</div>
<div class="td" style="left:636.3px;top:488.59999999999997px;width:56px;overflow:hidden;font-size:7px">柬埔寨</div>
<div class="ul" style="left:636px;top:484.79999999999995px;width:48px"></div>
<div class="ul" style="left:702px;top:483.79999999999995px;width:46px"></div>
<div class="td" style="left:701.8px;top:474.4px;color:#E8202A">10-25 14:39:38</div>
<div class="a" style="left:701.8px;top:486.4px;width:20px;height:12.4px;background:#F00000;border-radius:1px"></div>
<div class="t" style="left:701.8px;top:486.4px;width:20px;text-align:center;font-size:7px;line-height:12.4px;color:#fff;-webkit-text-stroke:.3px #fff">离线</div>
<div class="b r" style="left:767.5px;top:459.4px;width:20px">禁用</div>
<div class="b o" style="left:793.5px;top:459.4px;width:34px">地址信息</div>
<div class="b o" style="left:833.5px;top:459.4px;width:34px">联单设置</div>
<div class="b g" style="left:873.7px;top:459.4px;width:34.5px">联单管理</div>
<div class="b r" style="left:767.5px;top:472.9px;width:34px">重置任务</div>
<div class="b r" style="left:807.5px;top:472.9px;width:20px">签到</div>
<div class="b r" style="left:833.7px;top:472.9px;width:48.5px">签到工资发放</div>
<div class="b g" style="left:887.8px;top:472.9px;width:48.7px">调整签到天数</div>
<div class="b g" style="left:942.2px;top:472.9px;width:23px">编 辑</div>
<div class="b g" style="left:767.5px;top:486.4px;width:27px">加扣款</div>
<div class="b g" style="left:800.5px;top:486.4px;width:41px">设置信誉分</div>
<div class="b r" style="left:847.7px;top:486.4px;width:22.5px">删 除</div>
<div class="b o" style="left:767.5px;top:499.9px;width:31.5px">编辑VIP</div>
<div class="b o" style="left:804.5px;top:499.9px;width:34px">查看团队</div>
<div class="b bl" style="left:844.8px;top:499.9px;width:22px">账 变</div>
<div class="a" style="left:1017px;top:59px;width:7px;height:450px;background:#EDEEEE"></div>
</body></html>
